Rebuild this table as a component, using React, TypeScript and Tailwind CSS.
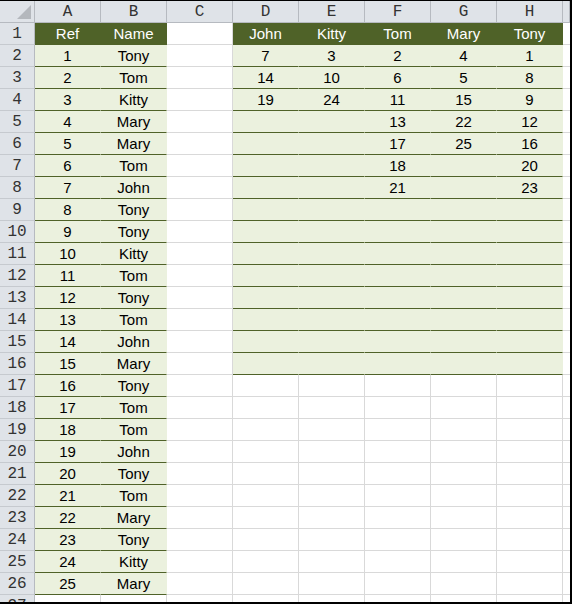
import React from 'react'

const names = ['Tony', 'Tom', 'Kitty', 'Mary', 'Mary', 'Tom', 'John', 'Tony', 'Tony', 'Kitty', 'Tom', 'Tony', 'Tom', 'John', 'Mary', 'Tony', 'Tom', 'Tom', 'John', 'Tony', 'Tom', 'Mary', 'Tony', 'Kitty', 'Mary']

const people = ['John', 'Kitty', 'Tom', 'Mary', 'Tony']
const lists = people.map((p) => names.map((n, i) => (n === p ? i + 1 : 0)).filter((x) => x > 0))

const letters = ['A', 'B', 'C', 'D', 'E', 'F', 'G', 'H', '']

function Cell({ row, col }: { row: number; col: number }) {
  // row: 1-based spreadsheet row, col: 0 = A
  let kind: 'blank' | 'head' | 'fill' = 'blank'
  let text: string | number = ''

  if (col <= 1 && row <= 26) {
    if (row === 1) {
      kind = 'head'
      text = col === 0 ? 'Ref' : 'Name'
    } else {
      kind = 'fill'
      text = col === 0 ? row - 1 : names[row - 2]
    }
  } else if (col >= 3 && col <= 7 && row <= 16) {
    const p = col - 3
    if (row === 1) {
      kind = 'head'
      text = people[p]
    } else {
      kind = 'fill'
      const v = lists[p][row - 2]
      text = v ? v : ''
    }
  }

  const base = 'h-[22px] flex items-center justify-center text-[15px] leading-none font-["Liberation_Sans",Arial,sans-serif]'
  if (kind === 'head')
    return <div className={`${base} bg-[#4f6228] text-white border-r border-b border-[#4f6228]`}>{text}</div>
  if (kind === 'fill')
    return <div className={`${base} bg-[#ebf1de] text-black border-r border-r-transparent border-b border-b-[#4f6228]`}>{text}</div>
  return <div className={`${base} bg-white border-r border-b border-[#d9d9d9]`}></div>
}

export default function App() {
  const rows = Array.from({ length: 27 }, (_, i) => i + 1)
  return (
    <div className="w-[572px] h-[604px] overflow-hidden bg-white border-t border-r-2 border-b-2 border-black">
      <div className="grid grid-cols-[35px_repeat(8,66px)_1fr]">
        {/* column headers */}
        <div className="h-[22px] relative bg-[#dfe3e8] border-r border-b border-[#b6bac0]">
          <div className="absolute right-[3px] bottom-[3px] w-0 h-0 border-l-[14px] border-l-transparent border-b-[14px] border-b-[#b4b8bd]" />
        </div>
        {letters.map((l, i) => (
          <div
            key={i}
            className="h-[22px] flex items-center justify-center bg-[#dfe3e8] border-r border-b border-[#b6bac0] text-[#333] text-[16px] font-['Liberation_Mono',monospace]"
          >
            {l}
          </div>
        ))}

        {rows.map((r) => (
          <React.Fragment key={r}>
            <div className="h-[22px] flex items-center justify-center bg-[#dfe3e8] border-r border-r-[#b6bac0] border-b border-b-[#c6cacf] text-[#333] text-[16px] font-['Liberation_Mono',monospace]">
              {r}
            </div>
            {letters.map((_, c) =>
              c < 8 ? (
                <Cell key={c} row={r} col={c} />
              ) : (
                <div key={c} className="h-[22px] bg-white border-b border-[#d9d9d9]" />
              )
            )}
          </React.Fragment>
        ))}
      </div>
    </div>
  )
}
